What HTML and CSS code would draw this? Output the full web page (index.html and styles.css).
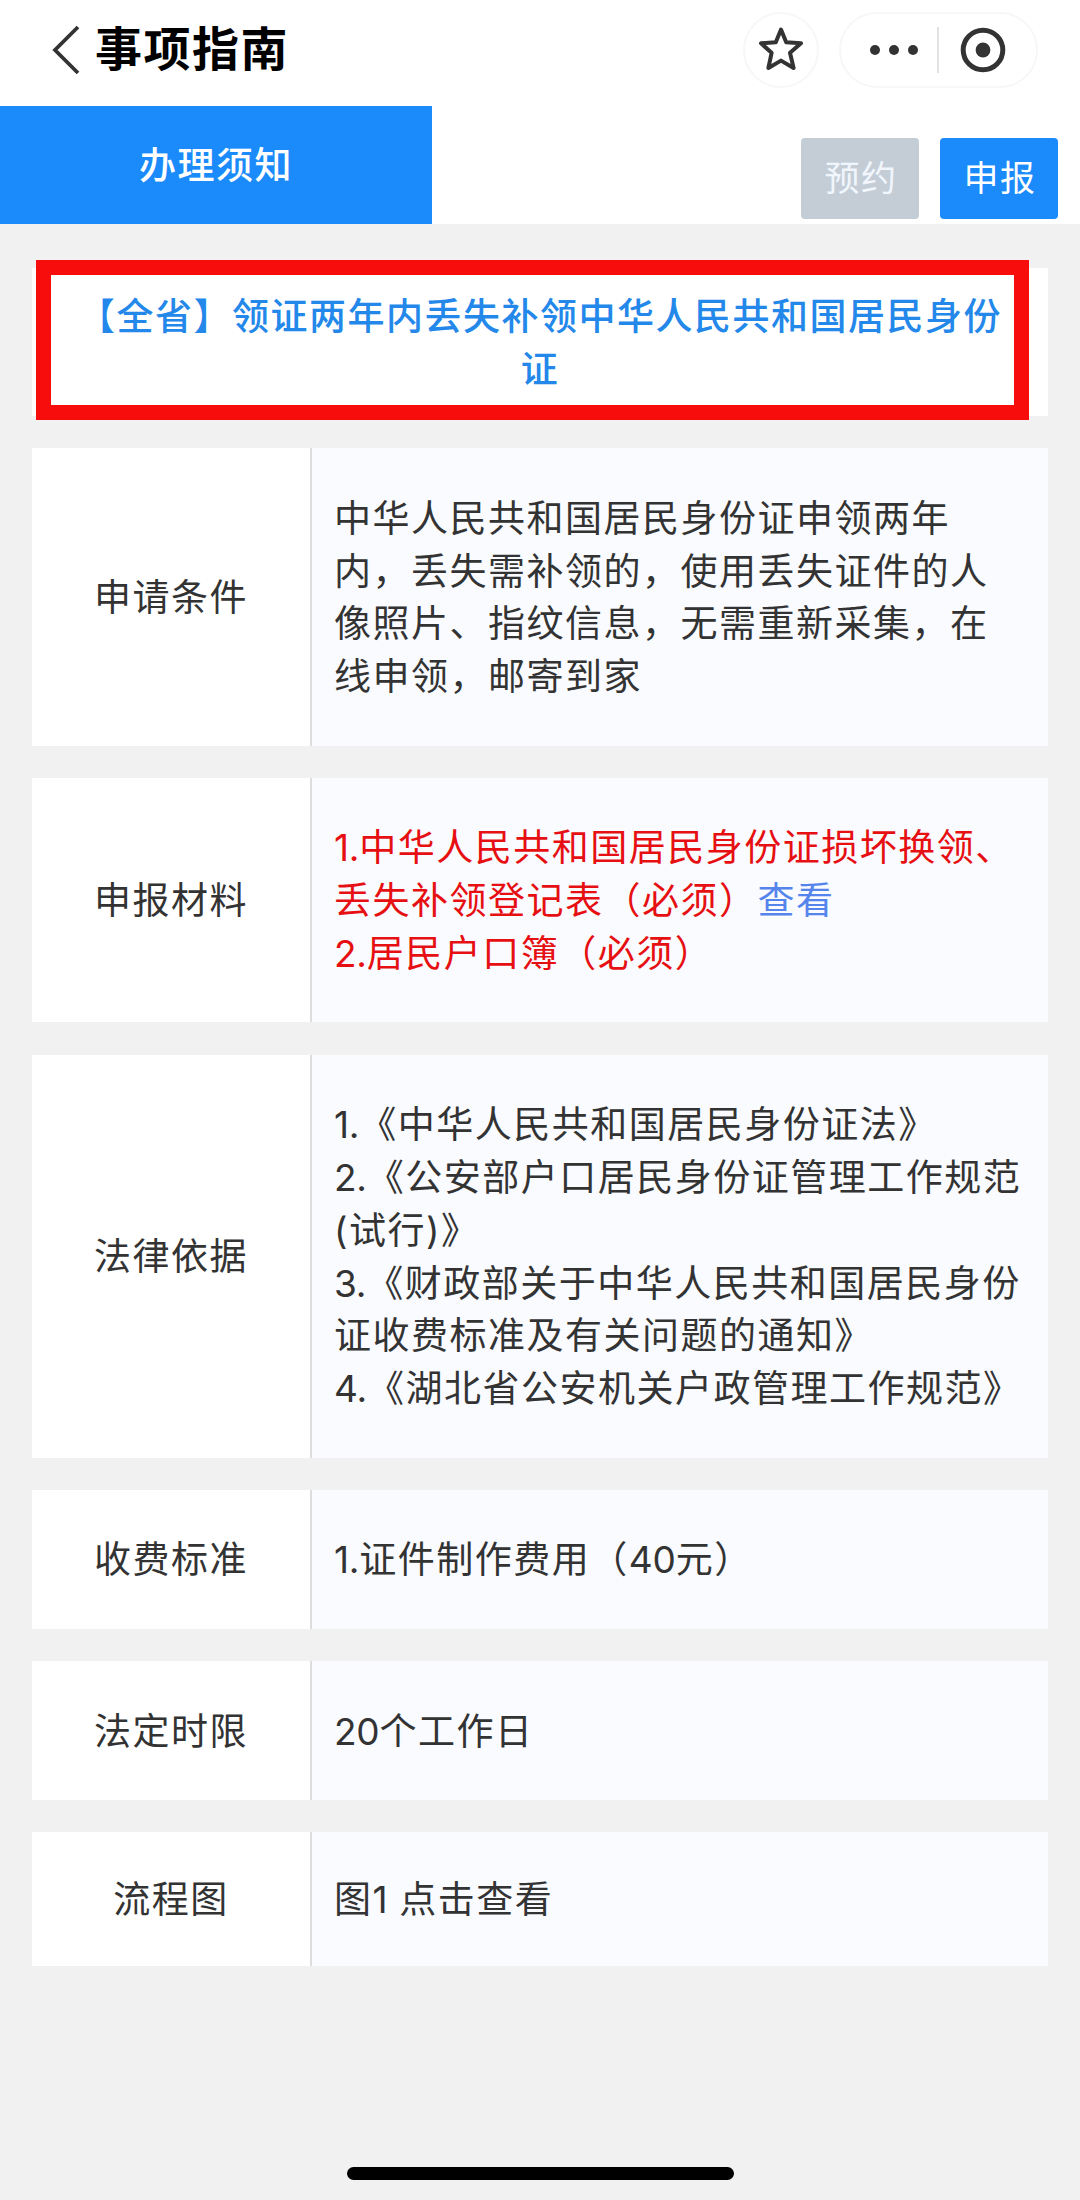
FILE: index.html
```
<!DOCTYPE html>
<html lang="zh-CN">
<head>
    <meta charset="UTF-8">
    <meta name="viewport" content="width=device-width, initial-scale=1.0">
    <title>事项指南</title>
    <link rel="stylesheet" href="styles.css">
</head>
<body>
    <header class="navbar">
        <svg class="back" width="30" height="50" viewBox="0 0 30 50">
            <path d="M27 2 L4 25 L27 48" fill="none" stroke="#333" stroke-width="3.8"/>
        </svg>
        <h1>事项指南</h1>
        <div class="star">
            <svg width="46" height="46" viewBox="0 0 46 46">
                <path d="M23 3.5 L28.2 16.2 L43 17.3 L32 26.8 L35.6 42 L23 34.6 L10.4 42 L13.6 26.8 L3 17.3 L17.8 16.2 Z" fill="none" stroke="#333" stroke-width="4" stroke-linejoin="round"/>
            </svg>
        </div>
        <div class="capsule">
            <svg class="dots" width="50" height="12" viewBox="0 0 50 12">
                <circle cx="6" cy="6" r="5"/>
                <circle cx="25" cy="6" r="5"/>
                <circle cx="44" cy="6" r="5"/>
            </svg>
            <span class="line"></span>
            <svg class="close" width="46" height="46" viewBox="0 0 46 46">
                <circle cx="23" cy="23" r="19.8" fill="none" stroke="#333" stroke-width="5"/>
                <circle cx="23" cy="23" r="7.4"/>
            </svg>
        </div>
    </header>

    <nav class="tabs">
        <div class="tab">办理须知</div>
        <div class="actions">
            <button class="btn disabled">预约</button>
            <button class="btn">申报</button>
        </div>
    </nav>

    <main class="container">
        <h2 class="item-title">【全省】领证两年内丢失补领中华人民共和国居民身份证</h2>

        <section class="row">
            <div class="label">申请条件</div>
            <div class="content">中华人民共和国居民身份证申领两年内，丢失需补领的，使用丢失证件的人像照片、指纹信息，无需重新采集，在线申领，邮寄到家</div>
        </section>
        <section class="row">
            <div class="label">申报材料</div>
            <div class="content required">
                <p><span class="num">1.</span>中华人民共和国居民身份证损坏换领、丢失补领登记表（必须）<a>查看</a></p>
                <p><span class="num">2.</span>居民户口簿（必须）</p>
            </div>
        </section>
        <section class="row">
            <div class="label">法律依据</div>
            <div class="content">
                <p><span class="num">1.</span>《中华人民共和国居民身份证法》</p>
                <p><span class="num">2.</span>《公安部户口居民身份证管理工作规范(试行)》</p>
                <p><span class="num">3.</span>《财政部关于中华人民共和国居民身份证收费标准及有关问题的通知》</p>
                <p><span class="num">4.</span>《湖北省公安机关户政管理工作规范》</p>
            </div>
        </section>
        <section class="row">
            <div class="label">收费标准</div>
            <div class="content"><span class="num">1.</span>证件制作费用（<span class="num">40</span>元）</div>
        </section>
        <section class="row">
            <div class="label">法定时限</div>
            <div class="content"><span class="num">20</span>个工作日</div>
        </section>
        <section class="row short">
            <div class="label">流程图</div>
            <div class="content">图<span class="num">1</span> 点击查看</div>
        </section>
    </main>

    <div class="home-bar"></div>
</body>
</html>
```

FILE: styles.css
```
*, *::after {
    box-sizing: border-box;
}
body {
    margin: 0;
    height: 2200px;
    display: flex;
    flex-direction: column;
    background: #f1f1f1;
    color: #333;
    font-family: Inter, "Noto Sans CJK SC", sans-serif;
    font-size: 37px;
    letter-spacing: 1.5px;
    line-height: 52.8px;
    text-spacing-trim: space-all;
}
h1, h2, p {
    margin: 0;
}

/* 顶部导航 */
.navbar {
    display: flex;
    align-items: center;
    height: 106px;
    padding: 0 42px 7px 51px;
    background: #fff;
}
.back {
    margin-right: 14px;
}
.navbar h1 {
    color: #000;
    font-size: 47px;
    font-weight: 700;
    letter-spacing: 1.5px;
}
.star {
    display: flex;
    align-items: center;
    justify-content: center;
    width: 76px;
    height: 76px;
    margin-left: auto;
    margin-right: 20px;
    padding-bottom: 1px;
    border: 2px solid #f7f7f7;
    border-radius: 50%;
}
.capsule {
    display: flex;
    align-items: center;
    width: 199px;
    height: 76px;
    padding-left: 28px;
    border: 2px solid #f7f7f7;
    border-radius: 38px;
}
.capsule svg {
    fill: #333;
}
.line {
    width: 2px;
    height: 46px;
    margin: 0 21px 0 18px;
    background: #e2e2e2;
}

/* 标签与按钮 */
.tabs {
    display: flex;
    justify-content: space-between;
    height: 118px;
    background: #fff;
}
.tab {
    width: 432px;
    background: #1b8bfb;
    color: #fff;
    font-weight: 500;
    line-height: 120px;
    text-align: center;
}
.actions {
    display: flex;
    gap: 21px;
    padding: 32px 22px 0 0;
}
.btn {
    width: 118px;
    height: 81px;
    padding: 0 0 7px 2px;
    border: none;
    border-radius: 4px;
    background: #1b8bfb;
    color: #fff;
    font-family: inherit;
    font-size: 35px;
    font-weight: 400;
    letter-spacing: 1.5px;
}
.btn.disabled {
    background: #c4ccd6;
    color: #f0f6fc;
}

/* 内容 */
.container {
    display: flex;
    flex-direction: column;
    gap: 32.4px;
    padding: 44px 32px 0;
}
.item-title {
    position: relative;
    height: 148px;
    padding: 23px 40px 0;
    background: #fff;
    color: #2388ea;
    font-size: 37px;
    font-weight: 500;
    text-align: center;
}
/* 红色标注框 */
.item-title::after {
    content: "";
    position: absolute;
    top: -8px;
    left: 4px;
    width: 993px;
    height: 160px;
    border: 15px solid #f60d0c;
}
.row {
    display: flex;
}
.label {
    display: flex;
    align-items: center;
    justify-content: center;
    width: 280px;
    flex-shrink: 0;
    padding-top: 3px;
    border-right: 2px solid #ddd;
    background: #fff;
}
.content {
    flex: 1;
    padding: 44.5px 24px 41.5px 22px;
    background: #f9fbff;
}
.short .content {
    padding: 42px 24px 39px 22px;
}
.num {
    letter-spacing: -0.2px;
}
.required {
    color: #e60f12;
}
.required a {
    color: #5585ec;
}
.home-bar {
    width: 387px;
    height: 13px;
    margin: auto auto 20px;
    border-radius: 7px;
    background: #000;
}
```
